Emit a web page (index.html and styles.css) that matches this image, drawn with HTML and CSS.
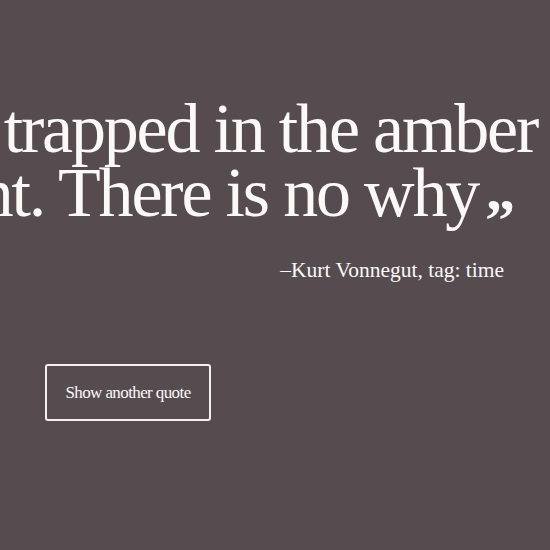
FILE: index.html
```html
<!DOCTYPE html>
<html lang="en">
<head>
<meta charset="utf-8">
<title>Random Quote</title>
<link rel="stylesheet" href="styles.css">
</head>
<body>
<main class="page">
  <blockquote class="quote">
    <p class="quote-line quote-line-1"><span class="quote-text">Well, here we are, Mr. Pilgrim, trapped in the amber</span></p>
    <p class="quote-line quote-line-2"><span class="quote-text">of this moment. There is no why<span class="close-mark">&rdquo;</span></span></p>
  </blockquote>
  <p class="author">&ndash;Kurt Vonnegut, tag: time</p>
  <div class="actions">
    <button class="btn" type="button">Show another quote</button>
  </div>
</main>
</body>
</html>
```

FILE: styles.css
```css
html, body {
  margin: 0;
  padding: 0;
  height: 100%;
  overflow: hidden;
}

body {
  background: #564c50;
  color: #fbf8f8;
  font-family: "Liberation Serif", "Times New Roman", serif;
}

.page {
  display: flex;
  flex-direction: column;
  padding-top: 97px;
}

.quote {
  margin: 0;
  display: flex;
  flex-direction: column;
}

.quote-line {
  margin: 0;
  display: flex;
  justify-content: flex-end;
  font-size: 70px;
  line-height: 64px;
  letter-spacing: -2.2px;
  white-space: nowrap;
}

.quote-line-1 {
  padding-right: 13px;
}

.quote-line-2 {
  padding-right: 37px;
}

.close-mark {
  display: inline-block;
  margin-left: 7px;
  font-size: 60px;
  font-weight: bold;
  line-height: 0;
  vertical-align: -24px;
  letter-spacing: -2px;
}

.author {
  margin: 33px 0 0;
  align-self: flex-end;
  padding-right: 46px;
  font-size: 21.5px;
  line-height: 24px;
}

.actions {
  margin-top: 82px;
  padding-left: 45px;
  display: flex;
}

.btn {
  width: 166px;
  height: 57px;
  background: transparent;
  border: 2px solid #f4f0f0;
  border-radius: 3px;
  color: #fbf8f8;
  font-family: "Liberation Serif", "Times New Roman", serif;
  font-size: 17px;
  letter-spacing: -0.6px;
  padding: 0;
  cursor: pointer;
}
```
